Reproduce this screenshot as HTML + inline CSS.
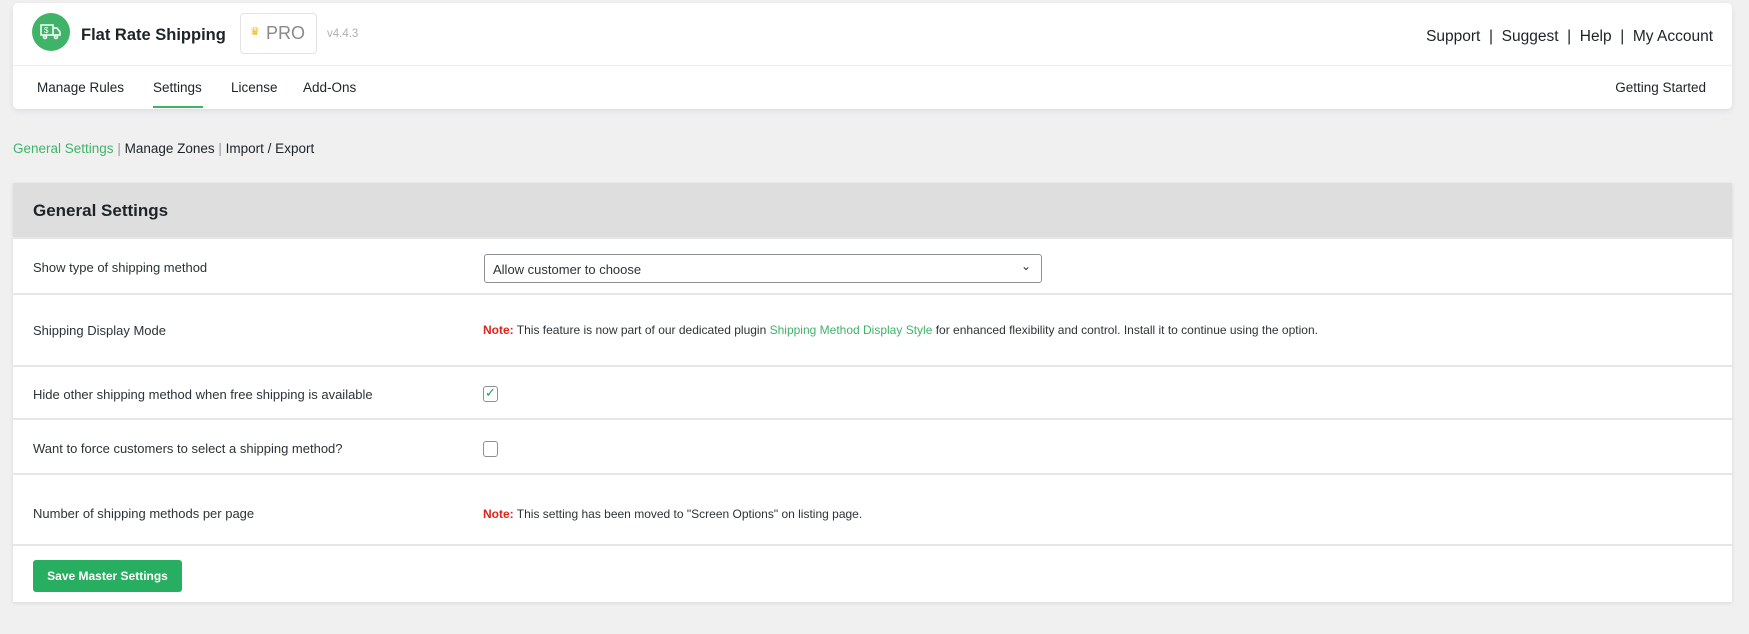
<!DOCTYPE html>
<html><head><meta charset="utf-8"><style>
*{box-sizing:border-box;margin:0;padding:0}
body{width:1749px;height:634px;background:#f0f0f1;font-family:"Liberation Sans",sans-serif;color:#1d2327;position:relative;overflow:hidden}
.abs{position:absolute;white-space:nowrap}
.card{position:absolute;left:13px;top:3px;width:1719px;height:106px;background:#fff;border-radius:5px;box-shadow:0 2px 6px rgba(0,0,0,.08)}
.nav{font-size:13.5px;color:#1d2327}
.panel{position:absolute;left:13px;top:183px;width:1719px;height:419px;background:#fff;box-shadow:0 1px 4px rgba(0,0,0,.1)}
.row{position:absolute;left:0;width:100%;border-top:2px solid #e6e6e6}
.lbl{position:absolute;left:20px;font-size:13px;color:#2c3338}
.note{position:absolute;left:470px;font-size:12px;color:#2c3338}
.note b{color:#e2231a}
.cb{position:absolute;left:470px;width:15px;height:16px;border:1px solid #8c8f94;border-radius:3px;background:#fff}
</style></head><body>
<div class="card">
 <div style="position:absolute;left:19px;top:10px;width:38px;height:38px;border-radius:50%;background:#3fb468"></div>
 <svg class="abs" style="left:27px;top:20px" width="22" height="18" viewBox="0 0 22 18" fill="none" stroke="#fff" stroke-width="1.5"><rect x="1" y="2" width="12" height="10"/><path d="M13 5h4l3 4v3h-7"/><circle cx="5" cy="14" r="1.5"/><circle cx="16" cy="14" r="1.5"/><text x="4" y="10" font-size="8" fill="#fff" stroke="none" font-family="Liberation Sans">$</text></svg>
 <div class="abs" style="left:68px;top:23px;font-size:16.5px;font-weight:bold;color:#1d2327">Flat Rate Shipping</div>
 <div style="position:absolute;left:227px;top:10px;width:77px;height:41px;border:1px solid #e3e3e3;border-radius:4px"></div>
 <div class="abs" style="left:237px;top:22px;font-size:11px;color:#f5b400">♛</div>
 <div class="abs" style="left:253px;top:20px;font-size:18px;color:#8a8a8a">PRO</div>
 <div class="abs" style="left:314px;top:25px;font-size:11.5px;color:#b0b0b0">v4.4.3</div>
 <div class="abs" style="right:19px;top:25px;font-size:15.5px;color:#1d2327">Support &nbsp;|&nbsp; Suggest &nbsp;|&nbsp; Help &nbsp;|&nbsp; My Account</div>
 <div style="position:absolute;left:0;top:62px;width:100%;height:1px;background:#ececec"></div>
 <div class="abs nav" style="left:24px;top:77px">Manage Rules</div>
 <div class="abs nav" style="left:140px;top:77px">Settings</div>
 <div style="position:absolute;left:140px;top:103px;width:50px;height:2px;background:#3fb468"></div>
 <div class="abs nav" style="left:218px;top:77px">License</div>
 <div class="abs nav" style="left:290px;top:77px">Add-Ons</div>
 <div class="abs nav" style="right:26px;top:77px">Getting Started</div>
</div>
<div class="abs" style="left:13px;top:141px;font-size:13.5px;color:#1d2327"><span style="color:#3fb468">General Settings</span> <span style="color:#999">|</span> Manage Zones <span style="color:#999">|</span> Import / Export</div>
<div class="panel">
 <div style="position:absolute;left:0;top:0;width:100%;height:54px;background:#dedede"></div>
 <div class="abs" style="left:20px;top:18px;font-size:17px;font-weight:bold;color:#1d2327">General Settings</div>
 <div class="row" style="top:54px;height:56px">
  <div class="lbl" style="top:21px">Show type of shipping method</div>
  <div style="position:absolute;left:471px;top:15px;width:558px;height:29px;border:1px solid #8c8f94;border-radius:3px;font-size:13px;padding:7px 8px;color:#2c3338">Allow customer to choose<span style="position:absolute;right:10px;top:4px;font-size:12px">⌄</span></div>
 </div>
 <div class="row" style="top:110px;height:72px">
  <div class="lbl" style="top:28px">Shipping Display Mode</div>
  <div class="note" style="top:28px"><b>Note:</b> This feature is now part of our dedicated plugin <span style="color:#3fb468">Shipping Method Display Style</span> for enhanced flexibility and control. Install it to continue using the option.</div>
 </div>
 <div class="row" style="top:182px;height:53px">
  <div class="lbl" style="top:20px">Hide other shipping method when free shipping is available</div>
  <div class="cb" style="top:19px"><span style="position:absolute;left:1px;top:-2px;color:#1e9e4a;font-size:13px">✓</span></div>
 </div>
 <div class="row" style="top:235px;height:55px">
  <div class="lbl" style="top:21px">Want to force customers to select a shipping method?</div>
  <div class="cb" style="top:21px"></div>
 </div>
 <div class="row" style="top:290px;height:71px">
  <div class="lbl" style="top:31px">Number of shipping methods per page</div>
  <div class="note" style="top:32px"><b>Note:</b> This setting has been moved to "Screen Options" on listing page.</div>
 </div>
 <div class="row" style="top:361px;height:58px">
  <div style="position:absolute;left:20px;top:14px;width:149px;height:32px;background:#27ae60;border-radius:3px;color:#fff;font-size:12px;font-weight:bold;text-align:center;line-height:32px">Save Master Settings</div>
 </div>
</div>
</body></html>
